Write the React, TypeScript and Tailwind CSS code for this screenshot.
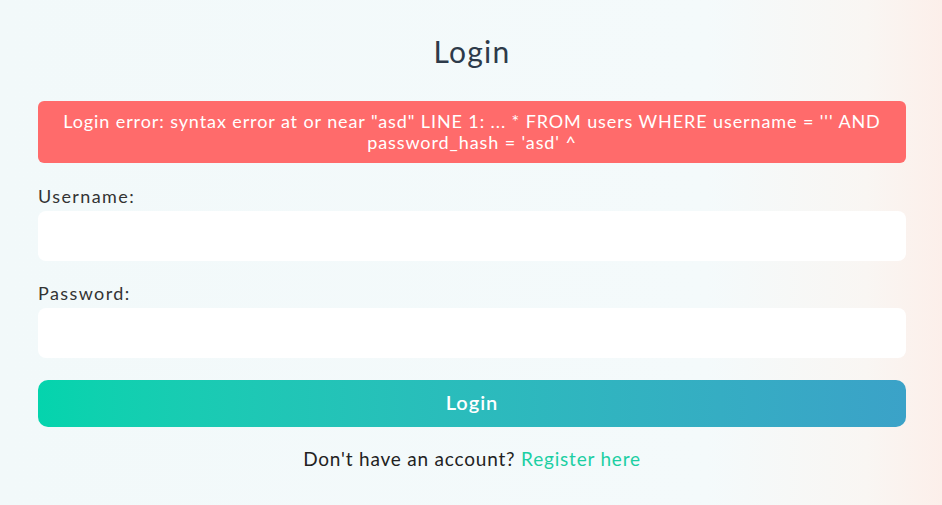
export default function App() {
  return (
    <div
      className="min-h-[505px] w-full bg-[linear-gradient(90deg,#f2f9fa_0%,#f4fafb_75%,#f9f6f3_92%,#fcefea_100%)] text-[#2d3748]"
      style={{ fontFamily: "Lato, 'Noto Sans', sans-serif" }}
    >
      <div className="ml-[38px] mr-[36px] pt-[33px]">
        <h1 className="text-center text-[30px] leading-[36px] font-normal text-[#2d3a4a] tracking-[1.2px]">
          Login
        </h1>

        <div className="mt-[32px] rounded-[6px] bg-[#ff6b6b] px-4 py-[10px] text-center text-[18px] leading-[21px] text-white tracking-[0.9px]">
          Login error: syntax error at or near "asd" LINE 1: ... * FROM users WHERE username = ''' AND
          password_hash = 'asd' ^
        </div>

        <form className="mt-[22px]" onSubmit={(e) => e.preventDefault()}>
          <label className="block text-[18px] leading-[22px] text-[#333] tracking-[1.4px]">Username:</label>
          <input
            type="text"
            className="mt-[4px] block h-[50px] w-full rounded-[8px] bg-white px-3 outline-none"
          />

          <label className="mt-[21px] block text-[18px] leading-[22px] text-[#333] tracking-[1.4px]">
            Password:
          </label>
          <input
            type="password"
            className="mt-[4px] block h-[50px] w-full rounded-[8px] bg-white px-3 outline-none"
          />

          <button
            type="submit"
            className="mt-[22px] block h-[47px] w-full rounded-[10px] bg-gradient-to-r from-[#04d4ad] to-[#3ba2c8] pb-[4px] text-[20px] font-semibold tracking-[1px] text-white"
          >
            Login
          </button>
        </form>

        <p className="mt-[20px] text-center text-[19px] leading-[24px] text-[#222] tracking-[0.8px]">
          Don't have an account?{" "}
          <a href="#" className="text-[#1ccfa3]">
            Register here
          </a>
        </p>
      </div>
    </div>
  );
}
